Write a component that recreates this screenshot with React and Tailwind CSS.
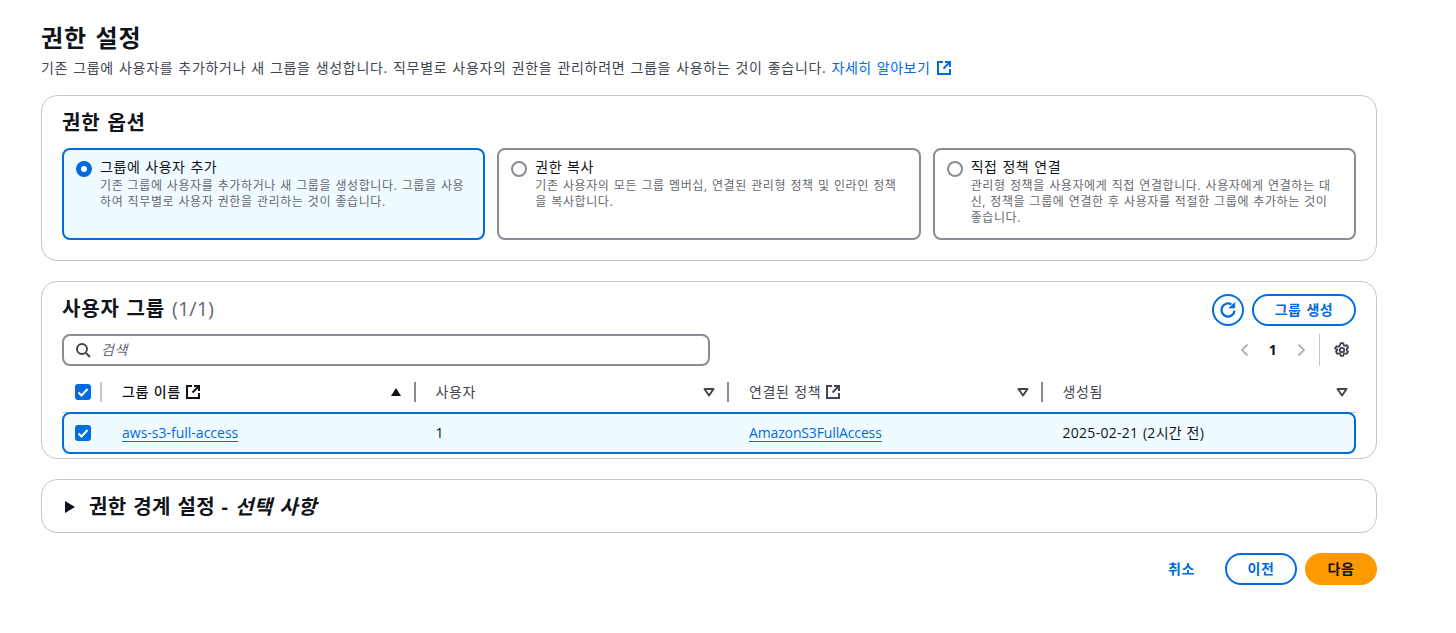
const font = { fontFamily: '"Open Sans", "Noto Sans CJK KR", sans-serif' };

function ExternalIcon({ className = "" }) {
  return (
    <svg viewBox="0 0 16 16" fill="none" stroke="currentColor" strokeWidth="2" className={"w-4 h-4 shrink-0 " + className}>
      <path d="M7 2H2v12h12V9" />
      <path d="M9 2h5v5" />
      <path d="M14 2 7.5 8.5" />
    </svg>
  );
}

function SortDown() {
  return (
    <svg viewBox="0 0 16 16" className="w-4 h-4 text-[#424650]" fill="none" stroke="currentColor" strokeWidth="2">
      <path d="M3.5 5h9L8 11.5z" strokeLinejoin="round" />
    </svg>
  );
}

function SortUp() {
  return (
    <svg viewBox="0 0 16 16" className="w-4 h-4 text-[#0f141a]" fill="currentColor">
      <path d="M3 12 8 4l5 8z" />
    </svg>
  );
}

function Check() {
  return (
    <span className="w-4 h-4 rounded-[3px] bg-[#006ce0] flex items-center justify-center">
      <svg viewBox="0 0 16 16" className="w-4 h-4" fill="none" stroke="white" strokeWidth="2">
        <path d="M3.5 8.5 6.5 11.5 12.5 5" />
      </svg>
    </span>
  );
}

function RadioCard({ selected, title, desc }) {
  return (
    <div
      className={[
        "flex-1 h-[92px] rounded-lg border-2 pl-[12px] pr-4 pt-[8px] flex gap-[8px]",
        selected ? "border-[#006ce0] bg-[#f0fbff]" : "border-[#8c8c94] bg-white",
      ].join(" ")}
    >
      {selected ? (
        <span className="mt-[3px] w-4 h-4 shrink-0 rounded-full border-[5px] border-[#006ce0] bg-white" />
      ) : (
        <span className="mt-[3px] w-4 h-4 shrink-0 rounded-full border-2 border-[#8c8c94] bg-white" />
      )}
      <div className="min-w-0">
        <div className="text-sm leading-[18px] mb-[2px] text-[#0f141a]">{title}</div>
        <div className="text-xs leading-4 text-[#656871] !tracking-[0.05em]">{desc}</div>
      </div>
    </div>
  );
}

function HeaderCell({ children, sort, first, last }) {
  return (
    <div className={"flex items-center h-[20px] pl-[20px] " + (last ? "pr-[6px]" : "pr-[10px]")}>
      <div className={"flex-1 flex items-center gap-1 text-sm " + (first ? "font-medium text-[#0f141a]" : "text-[#424650]")}>
        {children}
      </div>
      {sort}
    </div>
  );
}

export default function App() {
  return (
    <div
      style={font}
      className="min-h-[633px] bg-white pl-[41px] pr-[79px] pt-[22px] text-[#0f141a] [&_*]:tracking-[0.04em] [&_*]:[word-spacing:0.05em]"
    >
      <h1 className="text-2xl leading-[32px] font-bold">권한 설정</h1>
      <p className="mt-[4px] text-sm leading-5 text-[#424650] !tracking-[0.05em]">
        기존 그룹에 사용자를 추가하거나 새 그룹을 생성합니다. 직무별로 사용자의 권한을 관리하려면 그룹을 사용하는 것이 좋습니다.{" "}
        <a className="text-[#006ce0] inline-flex items-center gap-[6px]">
          자세히 알아보기 <ExternalIcon />
        </a>
      </p>

      <section className="mt-[17px] h-[166px] rounded-2xl border border-[#c6c6cd] px-5 pt-[14px]">
        <h2 className="text-xl leading-[26px] font-bold">권한 옵션</h2>
        <div className="mt-[12px] flex gap-3">
          <RadioCard selected title="그룹에 사용자 추가" desc="기존 그룹에 사용자를 추가하거나 새 그룹을 생성합니다. 그룹을 사용하여 직무별로 사용자 권한을 관리하는 것이 좋습니다." />
          <RadioCard title="권한 복사" desc="기존 사용자의 모든 그룹 멤버십, 연결된 관리형 정책 및 인라인 정책을 복사합니다." />
          <RadioCard title="직접 정책 연결" desc="관리형 정책을 사용자에게 직접 연결합니다. 사용자에게 연결하는 대신, 정책을 그룹에 연결한 후 사용자를 적절한 그룹에 추가하는 것이 좋습니다." />
        </div>
      </section>

      <section className="mt-[20px] h-[178px] rounded-2xl border border-[#c6c6cd] px-5 pt-[12px]">
        <div className="flex items-start justify-between">
          <h2 className="text-xl leading-[28px] font-bold pt-px">
            사용자 그룹 <span className="font-normal text-[#656871] !tracking-normal">(1/1)</span>
          </h2>
          <div className="flex gap-2">
            <button className="w-8 h-8 rounded-full border-2 border-[#006ce0] text-[#006ce0] flex items-center justify-center">
              <svg viewBox="0 0 16 16" className="w-[18px] h-[18px]" fill="none" stroke="currentColor" strokeWidth="2">
                <path d="M13.8 8.5A5.8 5.8 0 1 1 11 3" />
                <path d="M9 6.2h5V1.4z" fill="currentColor" strokeWidth="0.6" />
              </svg>
            </button>
            <button className="w-[104px] h-8 rounded-full border-2 border-[#006ce0] text-[#006ce0] text-sm font-semibold">
              그룹 생성
            </button>
          </div>
        </div>

        <div className="mt-[8px] flex items-center">
          <div className="w-[648px] h-8 rounded-lg border-2 border-[#8c8c94] flex items-center pl-[11px] gap-[10px]">
            <svg viewBox="0 0 16 16" className="w-4 h-4 text-[#424650]" fill="none" stroke="currentColor" strokeWidth="2">
              <circle cx="7" cy="7" r="5" />
              <path d="m11 11 4 4" />
            </svg>
            <span className="text-sm italic text-[#656871]">검색</span>
          </div>
          <div className="flex-1" />
          <div className="flex items-center text-[#b4b4bb]">
            <svg viewBox="0 0 16 16" className="w-4 h-4" fill="none" stroke="currentColor" strokeWidth="2">
              <path d="M10.5 2.5 5 8l5.5 5.5" />
            </svg>
            <span className="w-[40px] text-center text-sm font-bold text-[#0f141a]">1</span>
            <svg viewBox="0 0 16 16" className="w-4 h-4" fill="none" stroke="currentColor" strokeWidth="2">
              <path d="M5.5 2.5 11 8l-5.5 5.5" />
            </svg>
          </div>
          <div className="ml-[10px] w-px h-8 bg-[#c6c6cd]" />
          <svg viewBox="0 0 16 16" className="ml-[14px] mr-[6px] w-4 h-4 text-[#424650]" fill="none" stroke="currentColor" strokeWidth="1.8">
            <circle cx="8" cy="8" r="2.2" />
            <path d="M6.7 1.2h2.6l.4 1.9 1.3.7 1.8-.6 1.3 2.3-1.4 1.3v1.5l1.4 1.3-1.3 2.3-1.8-.6-1.3.7-.4 1.9H6.7l-.4-1.9-1.3-.7-1.8.6-1.3-2.3 1.4-1.3V7.8L1.1 6.5l1.3-2.3 1.8.6 1.3-.7z" strokeLinejoin="round" />
          </svg>
        </div>

        <div className="mt-[6px] grid grid-cols-[40px_1fr_1fr_1fr_1fr] items-center h-[41px] border-b border-[#c6c6cd]">
          <div className="flex items-center pl-[13px] h-[20px] border-r-2 border-[#c6c6cd]">
            <Check />
          </div>
          <div className="border-r-2 border-[#8c8c94]">
            <HeaderCell first sort={<SortUp />}>
              그룹 이름 <ExternalIcon className="text-[#0f141a]" />
            </HeaderCell>
          </div>
          <div className="border-r-2 border-[#8c8c94]">
            <HeaderCell sort={<SortDown />}>사용자</HeaderCell>
          </div>
          <div className="border-r-2 border-[#8c8c94]">
            <HeaderCell sort={<SortDown />}>
              연결된 정책 <ExternalIcon />
            </HeaderCell>
          </div>
          <HeaderCell last sort={<SortDown />}>생성됨</HeaderCell>
        </div>

        <div className="grid grid-cols-[40px_1fr_1fr_1fr_1fr] items-center h-[42px] rounded-lg border-2 border-[#006ce0] bg-[#f0fbff] text-sm -mt-px">
          <div className="pl-[11px]">
            <Check />
          </div>
          <div className="pl-[18px]">
            <a className="text-[#006ce0] underline underline-offset-[3px] [text-decoration-skip-ink:none] !tracking-normal">aws-s3-full-access</a>
          </div>
          <div className="pl-[19px]">1</div>
          <div className="pl-[20px]">
            <a className="text-[#006ce0] underline underline-offset-[3px] [text-decoration-skip-ink:none] !tracking-[-0.01em]">AmazonS3FullAccess</a>
          </div>
          <div className="pl-[21px] !tracking-[0.02em]">2025-02-21 (2시간 전)</div>
        </div>
      </section>

      <section className="mt-[20px] h-[54px] rounded-2xl border border-[#c6c6cd] pl-[22px] pt-[2px] flex items-center gap-[13px]">
        <svg viewBox="0 0 12 12" className="w-[12px] h-[12px] text-[#0f141a]" fill="currentColor">
          <path d="M1 0v12l10-6z" />
        </svg>
        <h2 className="text-xl font-bold !tracking-[0.02em]">
          권한 경계 설정 - <span className="italic !tracking-[0.02em]">선택 사항</span>
        </h2>
      </section>

      <div className="mt-[20px] flex justify-end items-center">
        <button className="text-[#006ce0] text-sm font-semibold mr-[30px]">취소</button>
        <button className="w-[72px] h-8 rounded-full border-2 border-[#006ce0] text-[#006ce0] text-sm font-semibold">이전</button>
        <button className="ml-2 w-[72px] h-8 rounded-full bg-[#ff9900] text-[#0f141a] text-sm font-semibold">다음</button>
      </div>
    </div>
  );
}
